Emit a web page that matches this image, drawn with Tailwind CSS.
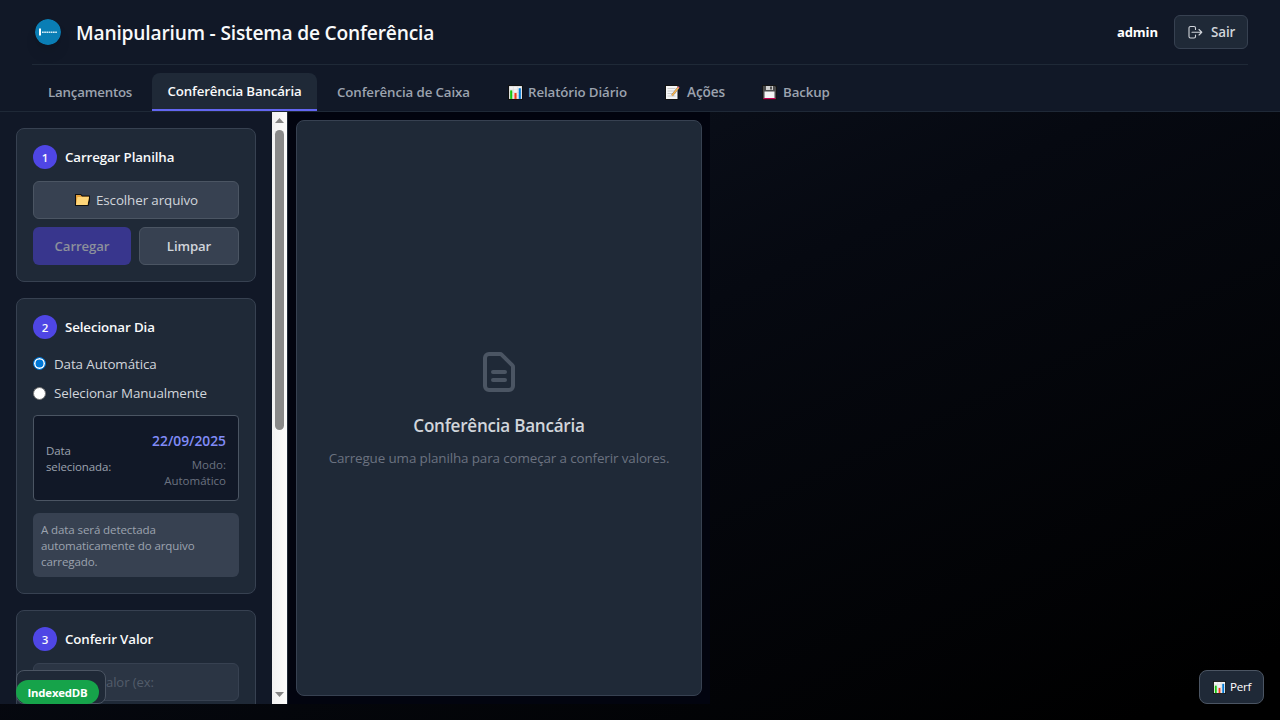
<!DOCTYPE html>
<html lang="pt-BR">
<head>
<meta charset="utf-8">
<title>Manipularium - Sistema de Conferência</title>
<script src="https://cdn.jsdelivr.net/npm/@tailwindcss/browser@4"></script>
</head>
<body class="h-[720px] w-[1280px] overflow-hidden bg-[linear-gradient(155deg,#111827_0%,#060911_48%,#000_95%)] font-['Open_Sans','Noto_Sans',sans-serif] text-[13.4px] leading-5 tracking-[-0.11px] whitespace-nowrap text-white">
<svg class="hidden">
  <symbol id="chart" viewBox="0 0 14 14"><path d="M0 0h14v14H0z" fill="#111"/><path d="M1 1h12v12H1z" fill="#f3f3f3"/><path d="M1 4h12M1 7h12M1 10h12M5 1v12M9 1v12" stroke="#d8d8d8" stroke-width=".5"/><path d="M2 5h2v8H2z" fill="#16c60c"/><path d="M6 7.500h2V13H6z" fill="#f03a17"/><path d="M10 3h2v10h-2z" fill="#0078d4"/></symbol>
  <symbol id="memo" viewBox="0 0 15 15"><path d="M0 0h13.500v15H0z" fill="#111"/><path d="M1 1h11.500v13H1z" fill="#f5f5f5"/><path d="M2.500 3.500h8M2.500 6h8M2.500 8.500h8M2.500 11h8" stroke="#ccc"/><path d="m7 10.500 6.500-8" stroke="#777" stroke-width="2"/><path d="m7 10.500 6.500-8" stroke="#ffb84a" stroke-width="1.500"/><path d="m13 3 1-1.200" stroke="#e9677b" stroke-width="1.600"/></symbol>
  <symbol id="floppy" viewBox="0 0 15 15"><path d="M0 0h13.500L15 1.500V15H0z" fill="#151515"/><path d="M1 1h12l1 1v12H1z" fill="#4b4b4b"/><path d="M4 1h7v4H4z" fill="#d0d0d0"/><path d="M8 1.500h2v3H8z" fill="#555"/><path d="M2.500 6.500h10V13h-10z" fill="#f4f4f4"/><path d="M1.500 13h12v1.200h-12z" fill="#c30052"/></symbol>
  <symbol id="folder" viewBox="0 0 15 12"><path d="M0 0h6l1.500 1.500H15V7l-1.500 5H0z" fill="#111"/><path d="M1 1h4.500L7 2.500h7L12.500 11H1z" fill="#e8a33d"/><path d="M2.500 3H14l-1.500 8H1z" fill="#ffd679"/></symbol>
</svg>
<div class="flex h-full flex-col">
  <header class="h-28 shrink-0 border-b border-[#1f2937] bg-[#111827] px-8">
    <div class="flex h-[65px] items-center justify-between border-b border-[#1f2937]">
      <div class="flex items-center gap-3">
        <div class="flex size-8 items-center justify-center">
          <svg class="size-[26px] rounded-full shadow-lg" viewBox="0 0 26 26"><circle cx="13" cy="13" r="13" fill="#0a7eb5"/><path d="M4 9.500h2v7H4z" fill="#fff"/><path d="M7 13.200h15" stroke="#d5ecf6" stroke-width="1.600" stroke-dasharray="1.700 .5"/></svg>
        </div>
        <h1 class="pt-0.5 text-[19.2px] leading-7 font-semibold tracking-[-0.19px] text-[#f9fafb]">Manipularium - Sistema de Conferência</h1>
      </div>
      <div class="flex items-center gap-4">
        <span class="text-[13.1px] font-bold">admin</span>
        <button class="flex h-[34px] w-[74px] items-center gap-2 rounded-md border border-[#374151] bg-[#1f2937] pl-[13px] font-semibold text-[#d1d5db]">
          <svg class="size-[15px] shrink-0" viewBox="0 0 15 15" fill="none" stroke="#d1d5db" stroke-width="1.100" stroke-linecap="round" stroke-linejoin="round"><path d="M7.500 4.500V3A1.500 1.500 0 0 0 6 1.500H2.500A1.500 1.500 0 0 0 1 3v8.500A1.500 1.500 0 0 0 2.500 13H6a1.500 1.500 0 0 0 1.500-1.500V10M4 7.250h9.800M11 4.500l2.800 2.750L11 10"/></svg>
          Sair
        </button>
      </div>
    </div>
    <nav class="flex h-[46px] items-end gap-1 text-[13.3px] font-semibold text-[#9ca3af]">
      <a class="flex h-[38px] w-[116px] items-center pl-4 tracking-[-0.2px]">Lançamentos</a>
      <a class="flex h-[38px] w-[165px] items-center justify-center rounded-t-lg border-b-2 border-[#6366f1] bg-[#1f2937] tracking-[-0.16px] text-[#f9fafb]">Conferência Bancária</a>
      <a class="flex h-[38px] w-[165px] items-center pl-4">Conferência de Caixa</a>
      <a class="flex h-[38px] w-[154px] items-center gap-[5px] pl-[18px]"><svg class="size-[15px]"><use href="#chart"/></svg>Relatório Diário</a>
      <a class="flex h-[38px] w-[93px] items-center gap-[7px] pl-[17px] text-[13.6px]"><svg class="size-[15px]"><use href="#memo"/></svg>Ações</a>
      <a class="flex h-[38px] items-center gap-[6px] pl-[17px]"><svg class="size-[15px]"><use href="#floppy"/></svg>Backup</a>
    </nav>
  </header>
  <div class="flex h-[592px] shrink-0">
    <aside class="relative flex w-[272px] flex-col gap-4 overflow-hidden bg-[#111827] p-4">
      <section class="h-[154px] shrink-0 rounded-lg border border-[#374151] bg-[#1f2937] p-4">
        <h2 class="flex h-6 items-center gap-2 text-[13.3px] font-semibold text-[#f9fafb]"><span class="flex size-6 items-center justify-center rounded-full bg-[#4f46e5] pt-px text-[11.5px]">1</span>Carregar Planilha</h2>
        <button class="mt-3 flex h-[38px] w-full items-center gap-[6px] rounded-md border border-[#4b5563] bg-[#374151] pl-[41px] text-[#d1d5db]"><svg class="h-3 w-[15px]"><use href="#folder"/></svg>Escolher arquivo</button>
        <div class="mt-2 flex gap-2 text-[13.2px] font-semibold">
          <button class="h-[38px] w-[98px] rounded-md bg-[#38368d] text-[#8c909b]">Carregar</button>
          <button class="h-[38px] w-[100px] rounded-md border border-[#4b5563] bg-[#374151] text-[#d1d5db]">Limpar</button>
        </div>
      </section>
      <section class="h-[296px] shrink-0 rounded-lg border border-[#374151] bg-[#1f2937] p-4">
        <h2 class="flex h-6 items-center gap-2 text-[13.3px] font-semibold text-[#f9fafb]"><span class="flex size-6 items-center justify-center rounded-full bg-[#4f46e5] pt-px text-[11.5px]">2</span>Selecionar Dia</h2>
        <div class="mt-3.5 flex h-[21px] items-center gap-2 text-[#d1d5db]"><i class="size-[13px] rounded-full border border-[#0078d7] bg-[#0078d7] shadow-[inset_0_0_0_1.5px_white]"></i>Data Automática</div>
        <div class="mt-[9px] flex h-5 items-center gap-2 text-[#d1d5db]"><i class="size-[13px] rounded-full border border-[#767676] bg-white"></i>Selecionar Manualmente</div>
        <div class="mt-3 flex h-[86px] items-center justify-between rounded border border-[#4b5563] bg-[#111827] px-3 text-[11.5px] leading-4">
          <p class="pt-px text-[#9ca3af]">Data<br>selecionada:</p>
          <div class="pt-1 text-right tracking-normal"><p class="text-[13.8px] leading-5 font-semibold text-[#818cf8]">22/09/2025</p><p class="mt-1.5 text-[11.5px] text-[#6b7280]">Modo:<br>Automático</p></div>
        </div>
        <p class="mt-3 h-16 rounded-md bg-[#374151] p-2 pt-[9px] text-[11.55px] leading-4 text-[#9ca3af]">A data será detectada<br>automaticamente do arquivo<br>carregado.</p>
      </section>
      <section class="h-[200px] shrink-0 rounded-lg border border-[#374151] bg-[#1f2937] p-4">
        <h2 class="flex h-6 items-center gap-2 text-[13.3px] font-semibold text-[#f9fafb]"><span class="flex size-6 items-center justify-center rounded-full bg-[#4f46e5] pt-px text-[11.5px]">3</span>Conferir Valor</h2>
        <div class="mt-3 flex h-[38px] items-center rounded-md border border-[#374151] bg-[#2b3544] pl-[72px] text-[13.1px] text-[#525c6a]">alor (ex:</div>
      </section>
      <div class="absolute bottom-0 left-4 h-[34px] w-[90px] rounded-lg border border-[#4b5563] bg-[#1f2937]"></div>
      <div class="absolute bottom-0 left-4 flex h-6 w-[83px] items-center justify-center rounded-full bg-[#16a34a] pt-px text-[11.4px] font-bold tracking-[-0.2px]">IndexedDB</div>
    </aside>
    <div class="flex w-[15px] flex-col items-center justify-between bg-[linear-gradient(90deg,#f1f1f1,#fcfcfc)] py-[6px]">
      <svg class="h-[5px] w-[9px]" viewBox="0 0 9 5"><path d="M0 5 4.500 0 9 5z" fill="#858585"/></svg>
      <div class="mt-[7px] mb-auto h-[300px] w-[9px] rounded-full bg-[#898989]"></div>
      <svg class="mb-[1px] h-[5px] w-[9px]" viewBox="0 0 9 5"><path d="M0 0 4.500 5 9 0z" fill="#858585"/></svg>
    </div>
    <main class="w-[423px] border-l border-[#1f2937] bg-[#02040f] p-2">
      <div class="flex h-[576px] flex-col items-center rounded-lg border border-[#374151] bg-[#1f2937] pt-[227px]">
        <svg class="size-12" viewBox="0 0 24 24" fill="none" stroke="#4b5563" stroke-width="2" stroke-linecap="round" stroke-linejoin="round"><path d="M9 12h6m-6 4h6m2 5H7a2 2 0 0 1-2-2V5a2 2 0 0 1 2-2h5.586a1 1 0 0 1 .707.293l5.414 5.414a1 1 0 0 1 .293.707V19a2 2 0 0 1-2 2z"/></svg>
        <h3 class="mt-4 text-[17.1px] leading-7 font-semibold tracking-[-0.25px] text-[#d1d5db]">Conferência Bancária</h3>
        <p class="mt-2 text-[#6b7280]">Carregue uma planilha para começar a conferir valores.</p>
      </div>
    </main>
  </div>
</div>
<button class="fixed right-4 bottom-4 flex h-[34px] w-[65px] items-center gap-1 rounded-lg border border-[#4b5563] bg-[#1f2937] pl-[13px] text-[11.6px] tracking-[-0.25px] text-white"><svg class="size-[13px] shrink-0"><use href="#chart"/></svg>Perf</button>
</body>
</html>
